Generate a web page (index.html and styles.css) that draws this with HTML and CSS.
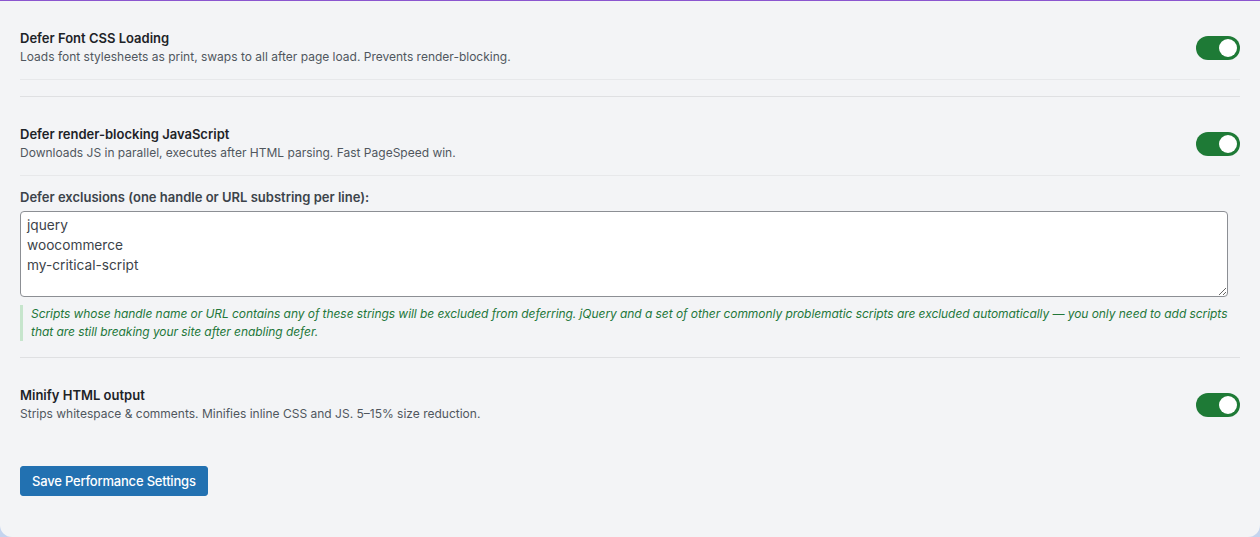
FILE: index.html
```html
<!DOCTYPE html>
<html lang="en">
<head>
<meta charset="utf-8">
<title>Performance Settings</title>
<link rel="stylesheet" href="styles.css">
</head>
<body>
<div class="panel">
  <div class="section">
    <div class="row">
      <div class="text">
        <div class="title">Defer Font CSS Loading</div>
        <div class="desc">Loads font stylesheets as print, swaps to all after page load. Prevents render-blocking.</div>
      </div>
      <span class="toggle"><span class="knob"></span></span>
    </div>
  </div>
  <div class="section">
    <div class="row">
      <div class="text">
        <div class="title">Defer render-blocking JavaScript</div>
        <div class="desc">Downloads JS in parallel, executes after HTML parsing. Fast PageSpeed win.</div>
      </div>
      <span class="toggle"><span class="knob"></span></span>
    </div>
    <div class="field">
      <label class="label" for="excl">Defer exclusions (one handle or URL substring per line):</label>
      <textarea id="excl" class="area">jquery
woocommerce
my-critical-script</textarea>
      <p class="help">Scripts whose handle name or URL contains any of these strings will be excluded from deferring. jQuery and a set of other commonly problematic scripts are excluded automatically — you only need to add scripts that are still breaking your site after enabling defer.</p>
    </div>
  </div>
  <div class="section">
    <div class="row last">
      <div class="text">
        <div class="title">Minify HTML output</div>
        <div class="desc">Strips whitespace &amp; comments. Minifies inline CSS and JS. 5–15% size reduction.</div>
      </div>
      <span class="toggle"><span class="knob"></span></span>
    </div>
  </div>
  <div class="actions">
    <button class="btn" type="button">Save Performance Settings</button>
  </div>
</div>
</body>
</html>
```
FILE: styles.css
```css
html, body {
  margin: 0;
  padding: 0;
}
body {
  background: #c4d4ef;
  font-family: Inter, "Liberation Sans", Arial, sans-serif;
  color: #1d2327;
}
.panel {
  box-sizing: border-box;
  height: 537px;
  background: #f3f4f6;
  border-top: 1px solid #8b55cf;
  border-radius: 0 0 12px 12px;
  padding: 0 20px;
}
.section {
  padding: 14px 0 16px;
}
.section + .section {
  border-top: 1px solid #dfe0e2;
}
.row {
  display: flex;
  align-items: center;
  justify-content: space-between;
  padding: 14px 0 13px;
  border-bottom: 1px solid #e7e8ea;
}
.row.last {
  border-bottom: none;
}
.title {
  font-size: 13px;
  line-height: 18px;
  font-weight: 600;
  color: #1d2327;
  margin-bottom: 1px;
}
.desc {
  font-size: 12px;
  line-height: 18px;
  color: #50575e;
}
.toggle {
  position: relative;
  display: block;
  width: 44px;
  height: 24px;
  border-radius: 12px;
  background: #1e7a36;
  flex: none;
}
.knob {
  position: absolute;
  top: 3px;
  right: 3px;
  width: 18px;
  height: 18px;
  border-radius: 50%;
  background: #ffffff;
}
.field {
  padding-top: 12px;
}
.label {
  display: block;
  font-size: 13px;
  line-height: 18px;
  font-weight: 600;
  color: #3c434a;
  margin-bottom: 5px;
}
.area {
  display: block;
  box-sizing: border-box;
  width: 99%;
  height: 86px;
  margin: 0;
  padding: 3px 6px;
  border: 1px solid #8c8f94;
  border-radius: 4px;
  background: #ffffff;
  font-family: Inter, "Liberation Sans", Arial, sans-serif;
  font-size: 13.7px;
  line-height: 20px;
  color: #3c434a;
  resize: both;
}
.help {
  box-sizing: border-box;
  width: 100%;
  margin: 8px 0 0;
  padding-left: 8px;
  border-left: 3px solid #c6e5cc;
  font-size: 12px;
  line-height: 18px;
  font-style: italic;
  letter-spacing: -0.06px;
  color: #23773a;
}
.actions {
  padding-top: 14px;
}
.btn {
  height: 30px;
  padding: 0 11px;
  border: 1px solid #2271b1;
  border-radius: 3px;
  background: #2271b1;
  color: #ffffff;
  font-family: Inter, "Liberation Sans", Arial, sans-serif;
  font-size: 13px;
  font-weight: 500;
  letter-spacing: -0.2px;
  cursor: pointer;
}
```
